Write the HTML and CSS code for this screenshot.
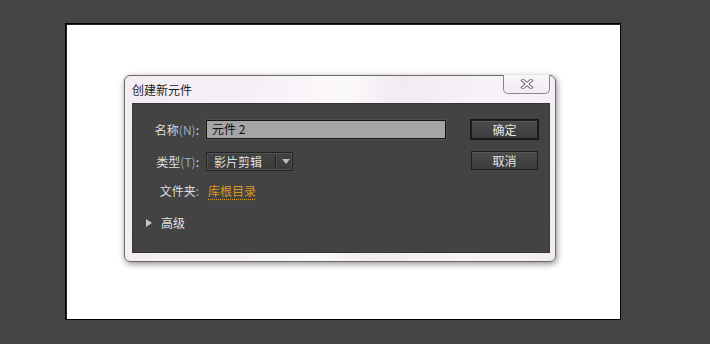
FILE: index.html
```html
<!DOCTYPE html>
<html lang="zh">
<head>
<meta charset="utf-8">
<title>创建新元件</title>
<link rel="stylesheet" href="styles.css">
</head>
<body>
<div class="canvas">
  <div class="dialog">
    <div class="titlebar">
      <span class="title">创建新元件</span>
      <div class="close">
        <svg width="14" height="10" viewBox="0 0 14 10">
          <path d="M3 1.5 L11 8.5 M11 1.5 L3 8.5" stroke="#6e6e74" stroke-width="3.6" stroke-linecap="square" fill="none"/>
          <path d="M3 1.5 L11 8.5 M11 1.5 L3 8.5" stroke="#ffffff" stroke-width="1.6" stroke-linecap="square" fill="none"/>
        </svg>
      </div>
    </div>
    <div class="panel">
      <div class="form">
        <div class="row r1">
          <span class="lbl">名称<span class="key">(N)</span>:</span>
          <div class="input">元件 2</div>
        </div>
        <div class="row r2">
          <span class="lbl">类型<span class="key">(T)</span>:</span>
          <div class="select">
            <span class="select-text">影片剪辑</span>
            <span class="sep"></span>
            <span class="arrow"></span>
          </div>
        </div>
        <div class="row r3">
          <span class="lbl">文件夹<span class="key">:</span></span>
          <span class="link">库根目录</span>
        </div>
        <div class="row r4">
          <span class="tri"></span>
          <span class="adv">高级</span>
        </div>
      </div>
      <div class="buttons">
        <div class="btn default">确定</div>
        <div class="btn">取消</div>
      </div>
    </div>
  </div>
</div>
</body>
</html>
```
FILE: styles.css
```css
* { box-sizing: border-box; }
html, body { margin: 0; height: 100%; }
body {
  background: #444444;
  padding: 23px 0 0 65px;
  font-family: "Noto Sans CJK SC", "Noto Sans", sans-serif;
  font-size: 12px;
  overflow: hidden;
}
.canvas {
  width: 556px;
  height: 297px;
  background: #ffffff;
  border: 1px solid #000;
  box-shadow: inset 1px 1px 0 #222;
  padding: 51px 0 0 58px;
}
.dialog {
  width: 432px;
  height: 187px;
  border: 1px solid #6a6a6a;
  border-radius: 6px;
  background: linear-gradient(100deg, #f3ecf3 0%, #f7f1f7 30%, #fcf9fc 48%, #f2ebf2 60%, #f8f3f8 80%, #f3edf3 100%);
  box-shadow: 1px 2px 6px rgba(0,0,0,0.45);
  display: flex;
  flex-direction: column;
}
.titlebar {
  height: 27px;
  display: flex;
  align-items: flex-start;
  padding: 0 5px 0 7px;
}
.title {
  color: #1c1c1c;
  line-height: 27px;
  margin-top: 0;
}
.close {
  margin-left: auto;
  margin-top: -1px;
  width: 47px;
  height: 19px;
  border: 1px solid #8c868c;
  border-top: none;
  border-radius: 0 0 5px 5px;
  background: linear-gradient(#faf6fa, #f1ebf1);
  display: flex;
  align-items: center;
  justify-content: center;
}
.close svg { display: block; }
.panel {
  margin: 0 5px 0 7px;
  height: 150px;
  background: #434343;
  border: 1px solid #353535;
  display: flex;
  padding-top: 16px;
}
.form {
  display: flex;
  flex-direction: column;
}
.row {
  display: flex;
  align-items: center;
  height: 19px;
}
.r2 { margin-top: 13px; }
.r3 { margin-top: 10px; }
.r4 { margin-top: 13px; padding-left: 13px; }
.lbl {
  width: 66px;
  text-align: right;
  color: #dcdcdc;
  margin-right: 7px;
  white-space: nowrap;
}
.key { color: #97abc6; }
.input {
  width: 240px;
  height: 19px;
  background: #a5a5a5;
  border: 1px solid #141414;
  box-shadow: 0 0 0 1px #4f4f4f;
  color: #101010;
  padding-left: 5px;
  line-height: 16px;
}
.select {
  width: 87px;
  height: 19px;
  border: 1px solid #232323;
  box-shadow: inset 0 0 0 1px #525252;
  background: linear-gradient(#434343, #3b3b3b);
  display: flex;
  align-items: center;
  color: #dedede;
}
.select-text { padding-left: 7px; width: 68px; }
.sep {
  width: 2px;
  height: 13px;
  border-left: 1px solid #1c1c1c;
  border-right: 1px solid #555;
}
.arrow {
  margin-left: 5px;
  width: 0; height: 0;
  border-left: 4px solid transparent;
  border-right: 4px solid transparent;
  border-top: 5px solid #bdbdbd;
}
.link {
  margin-left: 2px;
  color: #d9991c;
  text-decoration: underline dotted #d9991c;
  text-underline-offset: 3px;
}
.tri {
  width: 0; height: 0;
  border-top: 4px solid transparent;
  border-bottom: 4px solid transparent;
  border-left: 6px solid #c5c5c5;
  margin-right: 9px;
}
.adv { color: #e2e2e2; }
.buttons {
  margin-left: 25px;
  display: flex;
  flex-direction: column;
  gap: 12px;
}
.btn {
  width: 67px;
  height: 19px;
  border: 1px solid #1e1e1e;
  box-shadow: inset 0 1px 0 #575757;
  background: linear-gradient(#4b4b4b, #3d3d3d);
  color: #e4e4e4;
  text-align: center;
  line-height: 17px;
}
.btn.default {
  outline: 1px solid #151515;
  margin-top: 0;
}
```
